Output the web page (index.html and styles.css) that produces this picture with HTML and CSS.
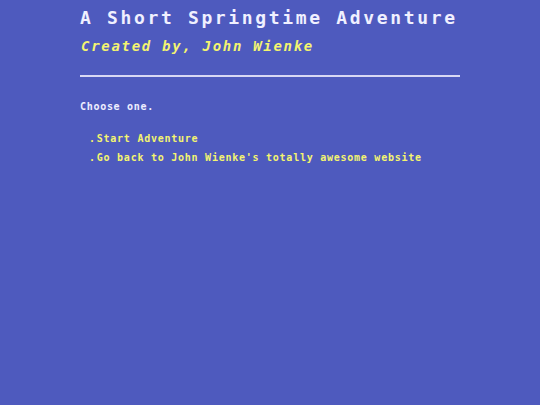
FILE: index.html
```html
<!DOCTYPE html>
<html>
<head>
	<title>A Short Springtime Adventure</title>
	<link rel="stylesheet" href="styles.css">
</head>
<body>
	<div class="page">
		<h1 class="title">A Short Springtime Adventure</h1>
		<h2 class="byline">Created by, John Wienke</h2>
		<hr class="rule">

		<p class="prompt">Choose one.</p>
		<ul class="choices">
			<li><a href="#start">Start Adventure</a></li>
			<li><a href="#home">Go back to John Wienke's totally awesome website</a></li>
		</ul>
	</div>
</body>
</html>
```
FILE: styles.css
```css
/* Retro terminal look */

html, body { margin: 0; padding: 0; }
body { background: #4e5abe; color: #eeeeff; font-family: "DejaVu Sans Mono", "Liberation Mono", monospace; font-weight: bold; }

.page { width: 380px; margin: 0 auto; padding-top: 8px; }

.title { margin: 0; font-size: 18px; line-height: 20px; letter-spacing: 2.65px; color: #f0f0ff; }
.byline { margin: 10px 0 0 1px; font-size: 14px; line-height: 16px; letter-spacing: 1.7px; font-style: italic; color: #f4f470; }

.rule { margin: 21px 0 0 0; border: 0; height: 2px; background: #d8d8f4; }

.prompt { margin: 24px 0 0 0; font-size: 10px; line-height: 12px; letter-spacing: 0.7px; color: #eeeeff; }

.choices { list-style: none; margin: 20px 0 0 0; padding: 0 0 0 9px; font-size: 10px; line-height: 12px; letter-spacing: 0.75px; }
.choices li { margin-bottom: 7px; }
.choices li::before { content: "."; color: #f4f470; margin-right: 1px; }
.choices a { color: #f4f470; text-decoration: none; }
```
